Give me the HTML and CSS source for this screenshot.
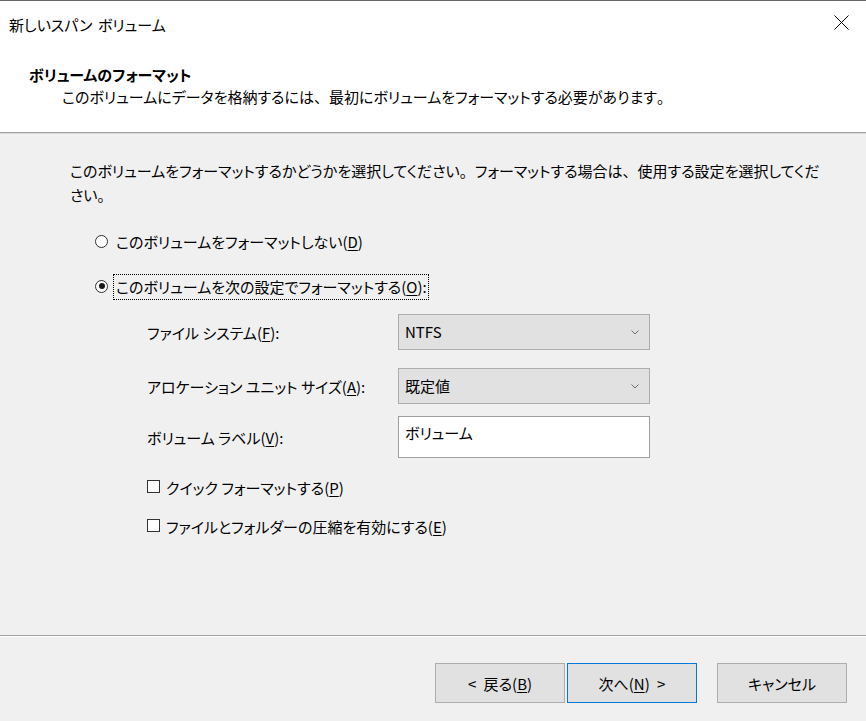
FILE: index.html
```html
<!DOCTYPE html>
<html lang="ja">
<head>
<meta charset="utf-8">
<title>新しいスパン ボリューム</title>
<link rel="stylesheet" href="styles.css">
</head>
<body>
<div class="window">
  <div class="titlebar">
    <span class="title">新しいスパン ボリューム</span>
    <svg class="close" width="15" height="15" viewBox="0 0 15 15"><path d="M0.5 0.5 L14.5 14.5 M14.5 0.5 L0.5 14.5" stroke="#000" stroke-width="1" fill="none"/></svg>
  </div>
  <div class="header">
    <div class="h-title">ボリュームのフォーマット</div>
    <div class="h-desc">このボリュームにデータを格納するには<span class="fw">、</span>最初にボリュームをフォーマットする必要があります<span class="fw">。</span></div>
  </div>
  <div class="content">
    <p class="intro">このボリュームをフォーマットするかどうかを選択してください<span class="fw">。</span>フォーマットする場合は<span class="fw">、</span>使用する設定を選択してください<span class="fw">。</span></p>
    <div class="radio-row first">
      <span class="radio"></span>
      <span class="rlabel">このボリュームをフォーマットしない(<u>D</u>)</span>
    </div>
    <div class="radio-row second">
      <span class="radio checked"></span>
      <span class="rlabel focus">このボリュームを次の設定でフォーマットする(<u>O</u>):</span>
    </div>
    <div class="options">
      <div class="opt-row r1">
        <span class="olabel">ファイル システム(<u>F</u>):</span>
        <div class="select"><span>NTFS</span><svg class="chev" width="8" height="5" viewBox="0 0 8 5"><path d="M0.5 0.5 L4 4 L7.5 0.5" stroke="#6d6d6d" stroke-width="1" fill="none"/></svg></div>
      </div>
      <div class="opt-row r2">
        <span class="olabel">アロケーション ユニット サイズ(<u>A</u>):</span>
        <div class="select"><span>既定値</span><svg class="chev" width="8" height="5" viewBox="0 0 8 5"><path d="M0.5 0.5 L4 4 L7.5 0.5" stroke="#6d6d6d" stroke-width="1" fill="none"/></svg></div>
      </div>
      <div class="opt-row r3">
        <span class="olabel">ボリューム ラベル(<u>V</u>):</span>
        <div class="textbox">ボリューム</div>
      </div>
    </div>
    <div class="check-row c1">
      <span class="checkbox"></span>
      <span class="clabel">クイック フォーマットする(<u>P</u>)</span>
    </div>
    <div class="check-row c2">
      <span class="checkbox"></span>
      <span class="clabel">ファイルとフォルダーの圧縮を有効にする(<u>E</u>)</span>
    </div>
  </div>
  <div class="footer">
    <button class="btn back">&lt; 戻る(<u>B</u>)</button>
    <button class="btn next">次へ(<u>N</u>) &gt;</button>
    <button class="btn cancel">キャンセル</button>
  </div>
</div>
</body>
</html>
```

FILE: styles.css
```css
* { box-sizing: border-box; }
html, body {
  margin: 0;
  padding: 0;
  width: 866px;
  height: 721px;
  overflow: hidden;
}
body {
  font-family: "Noto Sans CJK JP", "Noto Sans", sans-serif;
  font-size: 15px;
  font-feature-settings: "palt";
  color: #000;
  background: #f0f0f0;
}
u { text-decoration: underline; text-underline-offset: 2px; text-decoration-thickness: 1px; }
.fw { font-feature-settings: normal; }

.window {
  width: 866px;
  height: 721px;
  display: flex;
  flex-direction: column;
  border-top: 1px solid #646464;
  background: #f0f0f0;
}

.titlebar {
  height: 48px;
  background: #fff;
  display: flex;
  align-items: flex-start;
  justify-content: space-between;
  padding-left: 9px;
  padding-right: 17px;
}
.title {
  line-height: 48px;
  word-spacing: 2px;
}
.close {
  margin-top: 14px;
  display: block;
}

.header {
  background: #fff;
  height: 84px;
  padding-top: 16px;
  border-bottom: 1px solid #a0a0a0;
  box-shadow: 0 1px 0 #d8d8d8;
}
.h-title {
  padding-left: 29px;
  font-weight: bold;
  line-height: 20px;
}
.h-desc {
  padding-left: 62px;
  margin-top: 2px;
  line-height: 20px;
}

.content {
  flex: 1;
  padding-left: 70px;
  padding-top: 26px;
}
.intro {
  margin: 0;
  width: 754px;
  line-height: 24px;
}

.radio-row {
  display: flex;
  align-items: center;
  height: 26px;
  margin-left: 25px;
}
.radio-row.first { margin-top: 22px; }
.radio-row.second { margin-top: 19px; }
.radio {
  width: 13px;
  height: 13px;
  border: 1px solid #333;
  border-radius: 50%;
  background: #fff;
  margin-top: -2px;
  position: relative;
  flex: none;
}
.radio.checked::after {
  content: "";
  position: absolute;
  left: 2.5px;
  top: 2.5px;
  width: 6px;
  height: 6px;
  border-radius: 50%;
  background: #1a1a1a;
}
.rlabel {
  margin-left: 5px;
  padding: 0 1px 0 2px;
  line-height: 24px;
  border: 1px solid transparent;
}
.rlabel.focus {
  border: 1px dotted #000;
}

.options {
  margin-left: 77px;
  margin-top: 14px;
}
.opt-row {
  display: flex;
  align-items: center;
}
.opt-row.r2 { margin-top: 18px; }
.opt-row.r3 { margin-top: 12px; }
.olabel {
  width: 251px;
  flex: none;
}
.select {
  width: 252px;
  height: 36px;
  background: #e1e1e1;
  border: 1px solid #adadad;
  display: flex;
  align-items: center;
  justify-content: space-between;
  padding-left: 6px;
  padding-right: 10px;
}
.select span { margin-top: -1px; }
.chev { display: block; }
.textbox {
  width: 252px;
  height: 42px;
  background: #fff;
  border: 1px solid #a0a0a0;
  padding-left: 6px;
  padding-top: 6px;
  line-height: 20px;
}

.check-row {
  display: flex;
  align-items: center;
  height: 22px;
  margin-left: 77px;
}
.check-row.c1 { margin-top: 19px; }
.check-row.c2 { margin-top: 17px; }
.checkbox {
  width: 13px;
  height: 13px;
  border: 1px solid #333;
  background: #fff;
  margin-top: -4px;
  flex: none;
}
.clabel {
  margin-left: 6px;
  line-height: 22px;
}

.footer {
  height: 86px;
  border-top: 1px solid #a0a0a0;
  box-shadow: inset 0 1px 0 #fff;
  display: flex;
  justify-content: flex-end;
  align-items: flex-start;
  padding-top: 27px;
  padding-right: 19px;
}
.btn {
  width: 130px;
  height: 40px;
  background: #e1e1e1;
  border: 1px solid #adadad;
  font-family: inherit;
  font-size: 15px;
  font-feature-settings: "palt";
  word-spacing: 4px;
  color: #000;
  padding: 0;
  margin: 0;
}
.btn.next {
  margin-left: 2px;
  border-color: #0078d7;
}
.btn.cancel {
  margin-left: 20px;
}
```
